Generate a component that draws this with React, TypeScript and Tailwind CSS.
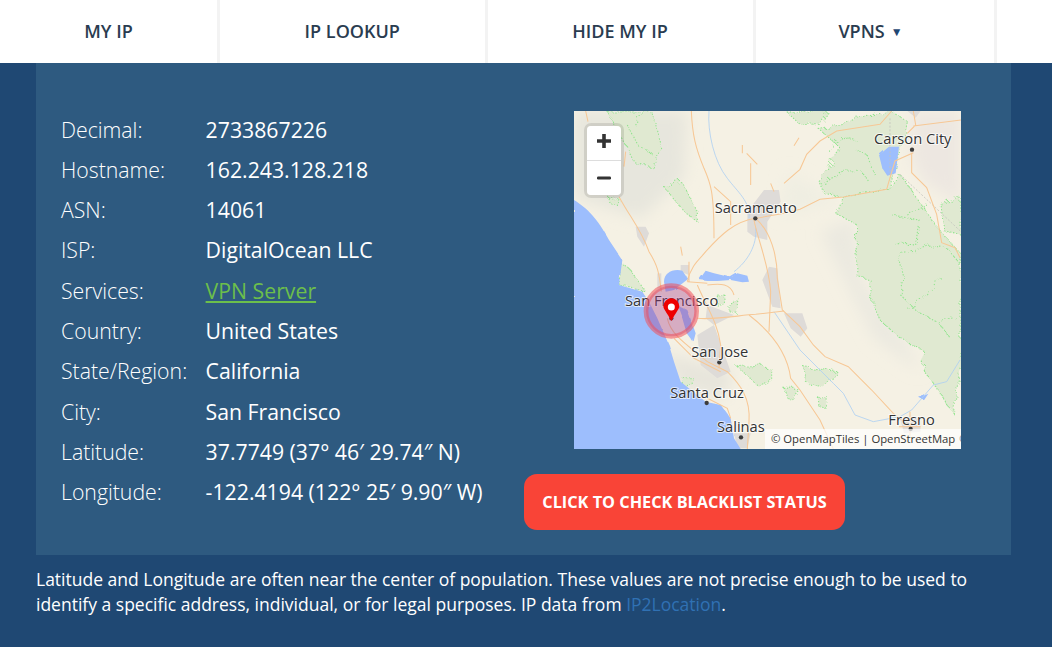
import React from "react";

const rows: [string, React.ReactNode][] = [
  ["Decimal:", "2733867226"],
  ["Hostname:", "162.243.128.218"],
  ["ASN:", "14061"],
  ["ISP:", "DigitalOcean LLC"],
  ["Services:", <a className="text-[#6cbf4b] underline">VPN Server</a>],
  ["Country:", "United States"],
  ["State/Region:", "California"],
  ["City:", "San Francisco"],
  ["Latitude:", "37.7749 (37° 46′ 29.74″ N)"],
  ["Longitude:", "-122.4194 (122° 25′ 9.90″ W)"],
];

const nav = [
  { t: "MY IP", w: "w-[220px]" },
  { t: "IP LOOKUP", w: "w-[267.5px]" },
  { t: "HIDE MY IP", w: "w-[268px]" },
  { t: "VPNS", w: "w-[241px] pr-[8px]", caret: true },
];

const roads = [
  "M352 18 C355 90 365 130 390 190 C410 235 420 260 420 400",
  "M420 245 L470 290 L470 360",
  "M135 275 C170 340 200 370 225 440 C250 480 255 500 262 560",
  "M545 340 C480 350 440 390 395 440 C380 460 350 480 340 530",
  "M545 340 C600 330 640 325 678 313 L738 283 L808 276 L938 253 L948 218 L963 168 L1018 143",
  "M545 340 C590 380 610 450 610 520 L625 615 L678 665 L718 720 L753 755 L823 785 L893 855 L958 925 L1008 965",
  "M540 345 C550 400 585 480 590 560 L585 680",
  "M630 235 L678 193 L698 148 L738 108 L788 78 L918 58 L953 18",
  "M1013 143 L1013 203 L1058 248 L1088 328 L1103 413 L1143 428 L1158 458",
  "M1018 18 L1025 60 L1000 85 M1018 63 L1161 45",
  "M370 640 C430 645 500 630 545 628 L630 618",
  "M525 630 C590 680 640 740 650 820 L678 855 L738 945 L778 1032",
  "M280 640 C290 690 340 720 400 770 L460 800 C500 840 530 880 525 950 L520 1032",
  "M400 540 C440 535 470 535 480 570",
  "M370 540 C400 610 430 650 440 720 L435 790",
  "M340 530 L400 535 M345 470 L345 530",
  "M300 700 L360 760 L440 800",
  "M400 880 L460 910 L470 940",
  "M505 120 L505 145 M518 145 L550 178 M530 175 L530 240 M675 98 L660 122 M320 425 L325 452 M590 235 L600 260",
  "M155 140 L150 185 M35 18 L42 50",
  "M1008 920 L1008 1000 M975 965 L1040 965",
];

const blue = [
  "M405 18 C400 80 420 170 460 220 C490 260 530 290 525 340",
  "M545 370 C550 420 520 470 480 500",
  "M600 620 L678 735 L738 795 L778 835 L808 865 L843 930 L898 950 L978 935 L1013 915 L1078 840 L1118 830 L1158 765",
];

const urban = [
  "M520 320 L570 255 L615 255 L620 290 L580 350 L580 405 L540 395 L520 380 Z",
  "M185 365 L215 365 L225 385 L210 425 L190 395 Z",
  "M320 480 L345 480 L345 510 L320 500 Z",
  "M565 525 L585 485 L610 490 L620 610 L595 605 Z",
  "M630 625 L685 625 L700 670 L680 695 L650 670 Z",
  "M400 600 L480 630 L440 650 L420 660 L395 640 Z",
  "M370 690 L420 660 L470 800 L430 820 L380 780 Z",
  "M978 940 L1038 940 L1040 980 L990 985 Z",
  "M480 985 L530 985 L520 1030 L490 1030 Z",
  "M1000 18 L1040 18 L1025 38 Z",
  "M250 505 L262 505 L262 550 L250 550 Z",
];

const greens = [
  "M100 18 L230 18 L262 120 L240 190 L180 170 Z",
  "M275 250 L320 225 L370 320 L370 350 L330 320 Z",
  "M105 280 L135 285 L130 302 L108 295 Z",
  "M635 18 L760 18 L735 55 L680 60 Z",
  "M735 230 L800 130 L733 70 L800 60 L900 28 L950 18 L1000 50 L990 100 L940 253 L808 276 L750 265 Z",
  "M788 328 L808 276 L940 253 L978 208 L1098 378 L1161 448 L1161 770 L1138 925 L1078 835 L1048 795 L1048 735 L978 700 L918 645 L888 575 L888 525 L845 510 L848 358 Z",
  "M1100 290 L1161 280 L1161 390 L1110 380 Z",
  "M490 785 L560 780 L590 790 L590 840 L550 840 Z",
  "M688 785 L790 800 L750 850 L700 835 Z",
  "M630 850 L670 850 L660 885 L640 880 Z",
  "M733 877 L763 880 L760 910 L735 905 Z",
  "M325 815 L355 815 L350 840 L325 845 Z",
  "M465 590 L495 585 L490 625 L465 620 Z",
  "M430 570 L455 570 L450 600 L430 600 Z",
  "M140 475 L165 490 L215 560 L135 540 Z",
];

const inner = [
  "M880 225 L860 195 L800 200 L745 240",
  "M840 130 L880 150 L900 210",
  "M765 140 L800 95 L850 110",
  "M980 455 L1060 420 L1120 430 L1161 480",
  "M975 455 L990 520 L980 570 L1030 620 L1090 650 L1130 700",
  "M955 330 L1035 345 L1025 420 L960 415",
  "M1000 610 L1060 570 L1100 510",
  "M1090 650 L1150 640",
  "M1060 300 L1000 330",
  "M160 60 L190 120 L240 150",
  "M205 25 L180 60",
];

const labels: [string, number, number][] = [
  ["Carson City", 900, 118],
  ["Sacramento", 422, 323],
  ["San Francisco", 153, 602],
  ["San Jose", 352, 755],
  ["Santa Cruz", 289, 879],
  ["Salinas", 429, 981],
  ["Fresno", 943, 959],
];

const dots: [number, number][] = [
  [1014, 134], [544, 340], [436, 772], [398, 894], [501, 997], [1010, 972], [292, 640],
];

function MapArt() {
  return (
    <svg viewBox="0 18 1161 1014" className="block h-full w-full">
      <defs>
        <filter id="soft" x="-30%" y="-30%" width="160%" height="160%"><feGaussianBlur stdDeviation="22" /></filter>
        <filter id="tiny"><feGaussianBlur stdDeviation="1" /></filter>
        <filter id="rough" x="-5%" y="-5%" width="110%" height="110%">
          <feTurbulence type="fractalNoise" baseFrequency="0.035" numOctaves="3" seed="4" />
          <feDisplacementMap in="SourceGraphic" scale="26" />
        </filter>
        <filter id="wob" x="-5%" y="-5%" width="110%" height="110%">
          <feTurbulence type="fractalNoise" baseFrequency="0.03" numOctaves="2" seed="9" />
          <feDisplacementMap in="SourceGraphic" scale="9" />
        </filter>
      </defs>
      <rect x="0" y="18" width="1161" height="1014" fill="#f5f1e4" />
      <g filter="url(#soft)">
        <path d="M0 18 L340 18 L330 220 L200 340 L0 280 Z" fill="#e7e6dd" />
        <path d="M1010 18 L1161 18 L1161 300 L1050 230 L1010 160 Z" fill="#ede7e1" />
        <path d="M740 380 L840 340 L860 520 L1000 720 L1040 800 L900 700 L800 500 Z" fill="#ebe9e0" />
        <path d="M260 740 L480 800 L450 880 L320 850 Z" fill="#e7e5dc" />
        <path d="M640 200 L800 290 L620 330 Z" fill="#efeee2" />
      </g>
      <g filter="url(#rough)">
        <g fill="#e0e9d1">
          {greens.map((d, i) => <path key={i} d={d} />)}
        </g>
        <g fill="none" stroke="#8fe58c" strokeWidth="3.2" strokeDasharray="4 5">
          {greens.map((d, i) => <path key={i} d={d} />)}
          {inner.map((d, i) => <path key={i} d={d} />)}
        </g>
      </g>
      <g fill="#dedbd8" filter="url(#tiny)">
        {urban.map((d, i) => <path key={i} d={d} />)}
      </g>
      <g filter="url(#wob)" fill="#9dbefd">
        <path d="M0 285 C40 310 70 340 105 405 L145 465 L135 540 L205 560 L225 590 L250 640 L285 720 L300 770 L320 830 L395 890 L440 900 L470 940 L480 1000 L505 1040 L0 1040 Z" />
        <path d="M270 530 C270 505 295 490 325 497 L342 522 L300 555 L275 560 Z" />
        <path d="M375 525 L395 497 L420 505 L470 517 L490 505 L520 512 L525 530 L505 532 L470 525 L430 528 L400 528 Z" />
        <path d="M310 600 L340 615 L365 685 L358 712 L338 685 L325 640 Z" />
        <path d="M945 125 L975 125 L965 205 L940 212 L925 190 L915 150 Z" />
        <path d="M1035 878 L1063 866 L1050 886 Z" />
      </g>
      <path d="M978 208 L1161 380 M948 40 L948 210" stroke="#c4c4be" strokeWidth="2.5" strokeDasharray="6 5" fill="none" />
      <g fill="none" stroke="#aed0f2" strokeWidth="2.5">
        {blue.map((d, i) => <path key={i} d={d} />)}
      </g>
      <g fill="none" stroke="#f7c896" strokeWidth="3.2" filter="url(#tiny)">
        {roads.map((d, i) => <path key={i} d={d} />)}
      </g>
      <g fill="#3c3c3c">
        {dots.map(([x, y], i) => <circle key={i} cx={x} cy={y} r="6.5" />)}
      </g>
      <g fontFamily="'Open Sans', sans-serif" fontSize="44" fill="#333" stroke="#fff" strokeOpacity="0.7" strokeWidth="6" style={{ paintOrder: "stroke" }}>
        {labels.map(([t, x, y]) => <text key={t} x={x} y={y}>{t}</text>)}
      </g>
      <circle cx="292" cy="618" r="76" fill="#a33c8c" fillOpacity="0.38" stroke="#f0505a" strokeOpacity="0.55" strokeWidth="14" />
      <path d="M292 648 C278 622 268 612 268 604 A24 24 0 1 1 316 604 C316 612 306 622 292 648 Z" fill="#ee0000" />
      <circle cx="292" cy="606" r="10.5" fill="#fff" />
    </svg>
  );
}

export default function App() {
  return (
    <div className="h-[647px] w-[1052px] overflow-hidden bg-[#1f4873] font-['Open_Sans',sans-serif] text-white">
      <nav className="flex h-[63px] bg-white text-[18px] font-semibold text-[#2a3c50]">
        {nav.map((n) => (
          <div key={n.t} className={`flex items-center justify-center gap-[6px] border-r-[3px] border-[#f3f3f3] ${n.w}`}>
            {n.t}
            {n.caret && <span className="text-[12px] leading-none text-[#1f4873]">▼</span>}
          </div>
        ))}
      </nav>
      <main className="mx-[36px] w-[975px]">
        <section className="flex h-[492px] bg-[#2e5a80] pl-[25px]">
          <div className="w-[463px] pt-[46.5px] text-[21.25px] leading-[40.3px]">
            {rows.map(([k, v]) => (
              <div key={k} className="flex whitespace-nowrap">
                <span className="w-[144.6px] font-light">{k}</span>
                <span>{v}</span>
              </div>
            ))}
          </div>
          <div className="flex flex-col pt-[48px]">
            <div className="relative ml-[50px] h-[338px] w-[387px] overflow-hidden">
              <MapArt />
              <div className="absolute left-[10px] top-[12px] w-[40px] overflow-hidden rounded-[7px] border-[3px] border-black/10 bg-clip-padding">
                <div className="flex h-[35px] items-center justify-center border-b border-[#ddd] bg-white pb-[4px]">
                  <svg width="16" height="16" viewBox="0 0 16 16"><path d="M6.2 1h3.6v5.2H15v3.6H9.8V15H6.2V9.8H1V6.2h5.2z" fill="#333" /></svg>
                </div>
                <div className="flex h-[34px] items-center justify-center bg-white">
                  <svg width="16" height="16" viewBox="0 0 16 16"><rect x="1" y="6.5" width="14" height="3" rx="1.2" fill="#333" /></svg>
                </div>
              </div>
              <div className="absolute bottom-0 left-[191px] right-0 flex h-[20px] items-center overflow-hidden whitespace-nowrap bg-white/70 pl-[6px] text-[11.3px] text-[#333]">
                © OpenMapTiles | OpenStreetMap<span className="ml-[4px] text-[#777]">©</span>
              </div>
            </div>
            <button className="mt-[25px] flex h-[56px] w-[321px] items-center justify-center rounded-[13px] bg-[#f94437] text-[16.3px] font-bold text-white">
              CLICK TO CHECK BLACKLIST STATUS
            </button>
          </div>
        </section>
        <p className="mt-[12px] w-[960px] text-[17.5px] leading-[25px]">
          Latitude and Longitude are often near the center of population. These values are not precise enough to be used to identify a specific address, individual, or for legal purposes. IP data from <a className="text-[#3071b3]">IP2Location</a>.
        </p>
      </main>
    </div>
  );
}
